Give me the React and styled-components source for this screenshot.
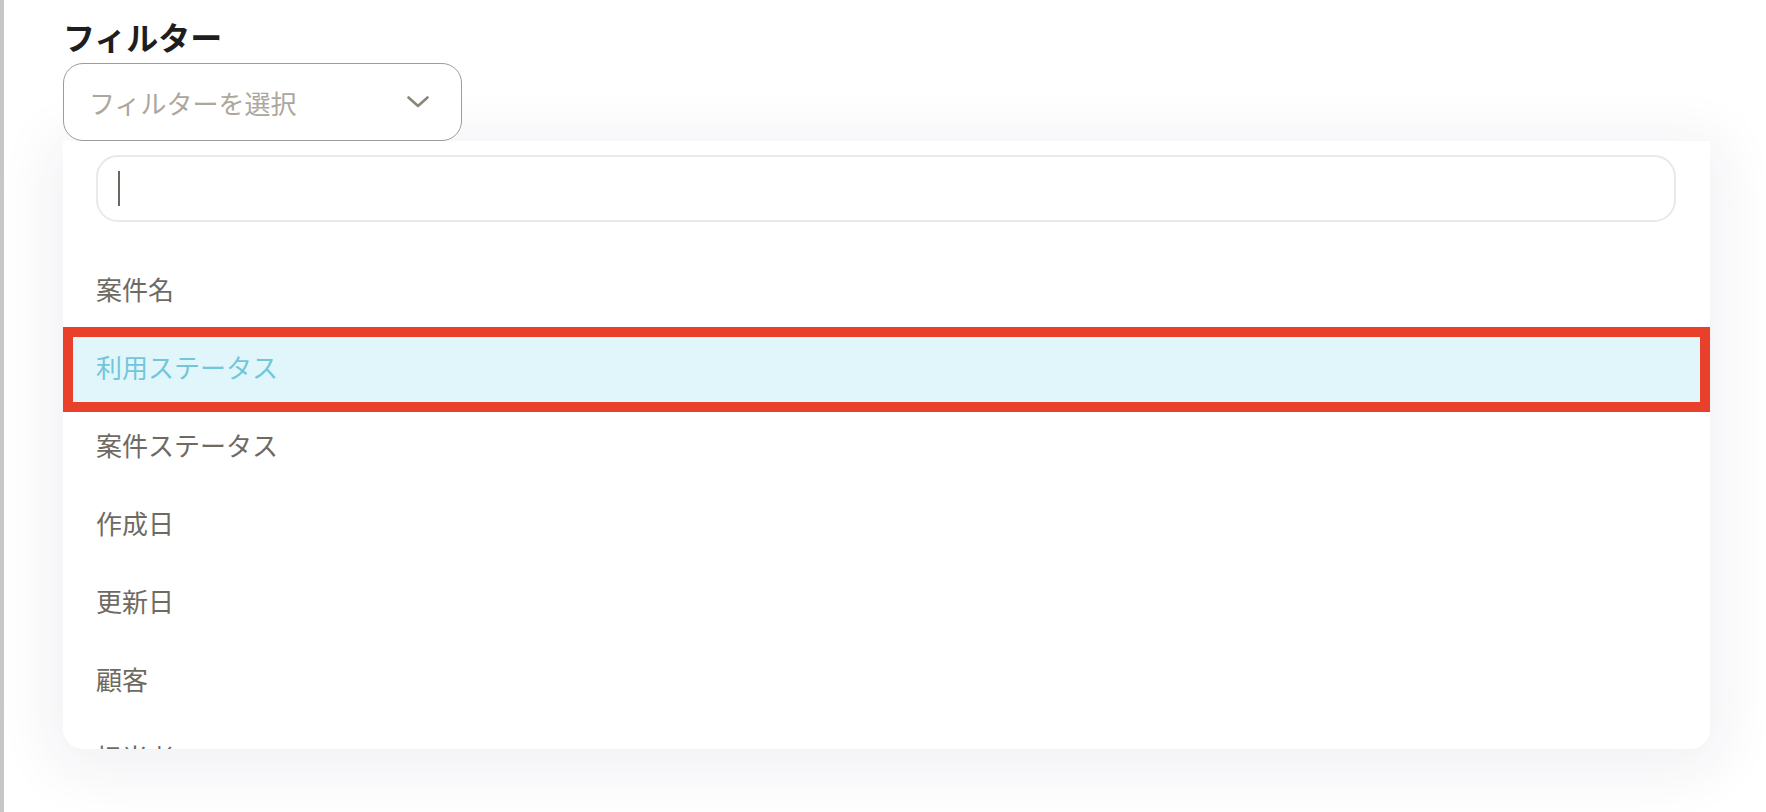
import React from "react";
import styled, { createGlobalStyle } from "styled-components";

const GlobalStyle = createGlobalStyle`
  html, body { margin: 0; padding: 0; background: #ffffff; }
  body {
    font-family: "Noto Sans CJK JP", "Noto Sans", sans-serif;
    -webkit-font-smoothing: antialiased;
  }
  * { box-sizing: border-box; }
`;

const Page = styled.div`
  display: flex;
  width: 1766px;
  height: 812px;
  overflow: hidden;
  background: #ffffff;
`;

const SideRule = styled.div`
  width: 4px;
  flex: none;
  background: #c7c7c7;
`;

const Content = styled.main`
  flex: 1;
  display: flex;
  flex-direction: column;
  padding: 17px 56px 0 59px;
`;

const Title = styled.h2`
  margin: 0 0 7px 0;
  font-size: 32px;
  line-height: 39px;
  font-weight: 700;
  color: #1e1e1e;
  letter-spacing: 0;
`;

const SelectButton = styled.button`
  width: 399px;
  height: 78px;
  flex: none;
  display: flex;
  align-items: center;
  justify-content: space-between;
  padding: 0 32px 0 25px;
  border: 1.8px solid #9c9c9c;
  border-radius: 20px;
  background: #ffffff;
  font-family: inherit;
  font-size: 26px;
  color: #aca79d;
  cursor: pointer;
  position: relative;
  z-index: 2;
`;

const Chevron = styled.svg`
  width: 22px;
  height: 12px;
  flex: none;
`;

const Panel = styled.div`
  width: 1647px;
  height: 608px;
  flex: none;
  background: #ffffff;
  border-radius: 0 0 20px 20px;
  box-shadow: 0 10px 60px 12px rgba(40, 30, 80, 0.065);
  display: flex;
  flex-direction: column;
  overflow: hidden;
  position: relative;
  z-index: 1;
`;

const SearchWrap = styled.div`
  flex: none;
  margin: 14px 34px 0 33px;
  height: 67px;
  border: 2px solid #ece8e3;
  border-radius: 22px;
  display: flex;
  align-items: center;
  padding-left: 20px;
  position: relative;
`;

const SearchInput = styled.input`
  flex: 1;
  height: 100%;
  border: none;
  outline: none;
  background: transparent;
  font-family: inherit;
  font-size: 26px;
  color: #6e6a62;
  caret-color: transparent;
  padding: 0;
`;

const Caret = styled.span`
  position: absolute;
  left: 20px;
  top: 14px;
  width: 2px;
  height: 35px;
  background: #6b6660;
`;

const List = styled.ul`
  flex: none;
  list-style: none;
  margin: 30px 0 0;
  padding: 0;
  display: flex;
  flex-direction: column;
`;

const Item = styled.li`
  height: 78px;
  flex: none;
  display: flex;
  align-items: center;
  padding: 0 0 0 33px;
  font-size: 26px;
  color: ${(p) => (p.$active ? "#72c6d9" : "#6e6a62")};
  background: ${(p) => (p.$active ? "#e1f6fb" : "transparent")};
  position: relative;

  ${(p) =>
    p.$active &&
    `
    &::after {
      content: "";
      position: absolute;
      top: -3px;
      bottom: -4px;
      left: 0;
      right: 0;
      border: 10px solid #e8402a;
      pointer-events: none;
    }
  `}
`;

const ItemText = styled.span`
  display: block;
  padding-bottom: 5px;
`;

const items = [
  "案件名",
  "利用ステータス",
  "案件ステータス",
  "作成日",
  "更新日",
  "顧客",
  "担当者",
];

export default function App() {
  return (
    <>
      <GlobalStyle />
      <Page>
        <SideRule />
        <Content>
          <Title>フィルター</Title>
          <SelectButton type="button">
            <span>フィルターを選択</span>
            <Chevron viewBox="0 0 22 12" fill="none">
              <path
                d="M1.5 1.5 L11 10 L20.5 1.5"
                stroke="#8b857a"
                strokeWidth="2.6"
                strokeLinecap="round"
                strokeLinejoin="round"
              />
            </Chevron>
          </SelectButton>
          <Panel>
            <SearchWrap>
              <SearchInput type="text" aria-label="検索" />
              <Caret />
            </SearchWrap>
            <List>
              {items.map((label, i) => (
                <Item key={label} $active={i === 1}>
                  <ItemText>{label}</ItemText>
                </Item>
              ))}
            </List>
          </Panel>
        </Content>
      </Page>
    </>
  );
}
